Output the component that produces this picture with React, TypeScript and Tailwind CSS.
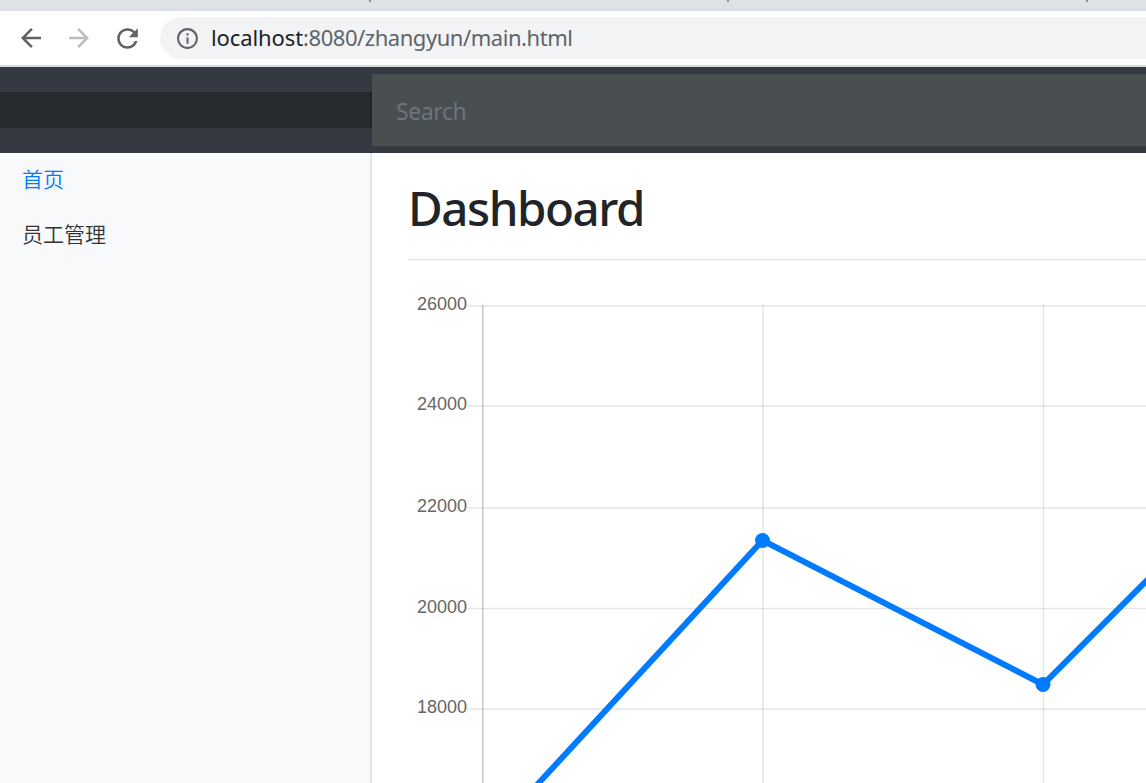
const yTicks = [
  { label: "26000", y: 306, text: 310 },
  { label: "24000", y: 406, text: 410 },
  { label: "22000", y: 508, text: 512 },
  { label: "20000", y: 608.5, text: 613 },
  { label: "18000", y: 709, text: 713 },
];

function BrowserBar() {
  return (
    <div className="h-[67px] shrink-0 flex flex-col">
      <div className="relative h-[11px] bg-[#dee1e6]">
        <span className="absolute left-[369px] top-0 h-[2px] w-[2px] bg-[#8d9095]" />
        <span className="absolute left-[727px] top-0 h-[2px] w-[2px] bg-[#8d9095]" />
        <span className="absolute left-[1086px] top-0 h-[2px] w-[2px] bg-[#8d9095]" />
      </div>
      <div className="flex h-[54px] items-center bg-white pl-4">
        <svg className="size-[30px]" viewBox="0 0 24 24" fill="#5f6368">
          <path d="M20 11H7.83l5.59-5.59L12 4l-8 8 8 8 1.41-1.41L7.83 13H20v-2z" />
        </svg>
        <svg className="ml-[18px] size-[30px]" viewBox="0 0 24 24" fill="#babcbe">
          <path d="M12 4l-1.41 1.41L16.17 11H4v2h12.17l-5.58 5.59L12 20l8-8z" />
        </svg>
        <svg className="ml-[18px] size-[31px]" viewBox="0 0 24 24" fill="#5f6368">
          <path d="M17.65 6.35C16.2 4.9 14.21 4 12 4c-4.42 0-7.99 3.58-7.99 8s3.57 8 7.99 8c3.73 0 6.84-2.55 7.73-6h-2.08c-.82 2.33-3.04 4-5.65 4-3.31 0-6-2.69-6-6s2.69-6 6-6c1.66 0 3.14.69 4.22 1.78L13 11h7V4l-2.35 2.35z" />
        </svg>
        <div className="ml-[17px] flex h-[42px] flex-1 items-center rounded-l-full bg-[#f1f3f4] pl-[15px]">
          <svg className="size-[25px] shrink-0" viewBox="0 0 24 24" fill="#5f6368">
            <path d="M11 7h2v2h-2zm0 4h2v6h-2zm1-9C6.48 2 2 6.48 2 12s4.48 10 10 10 10-4.48 10-10S17.52 2 12 2zm0 18c-4.41 0-8-3.59-8-8s3.59-8 8-8 8 3.59 8 8-3.59 8-8 8z" />
          </svg>
          <span className="ml-[11px] whitespace-nowrap pb-[2px] text-[22px] leading-[30px] tracking-[-0.45px] text-[#5f6368]">
            <span className="tracking-[-0.1px] text-[#202124]">localhost</span>:8080/zhangyun/main.html
          </span>
        </div>
      </div>
      <div className="h-[2px] bg-[#d7dadd]" />
    </div>
  );
}

function Header() {
  return (
    <header className="flex h-[86px] shrink-0 items-center bg-[#343a40]">
      <div className="flex h-full w-[372px] items-center bg-[#353941]">
        <div className="h-9 w-full bg-[#272a2e] shadow-[inset_-2px_0_0_#1f2225]" />
      </div>
      <div className="flex h-[72px] flex-1 items-center bg-[#494e51] px-6 text-[23px] tracking-[-0.4px] text-[#6c757d]">
        <span className="pt-[3px]">Search</span>
      </div>
    </header>
  );
}

function Chart() {
  return (
    <svg className="block h-[523px] w-[774px]" viewBox="372 260 774 523">
      {yTicks.map((t) => (
        <g key={t.label}>
          <line x1="467" x2="1146" y1={t.y} y2={t.y} stroke="#000" strokeOpacity="0.1" strokeWidth="1.5" />
          <text x="467" y={t.text} textAnchor="end" fill="#666" fontSize="18" fontFamily="'Liberation Sans', sans-serif">
            {t.label}
          </text>
        </g>
      ))}
      <line x1="482.75" x2="482.75" y1="305" y2="783" stroke="#000" strokeOpacity="0.22" strokeWidth="1.5" />
      <line x1="763" x2="763" y1="305" y2="783" stroke="#000" strokeOpacity="0.1" strokeWidth="1.5" />
      <line x1="1043.5" x2="1043.5" y1="305" y2="783" stroke="#000" strokeOpacity="0.1" strokeWidth="1.5" />
      <polyline
        points="482,844.5 762.5,540.5 1043,684.5 1323,404"
        fill="none"
        stroke="#007bff"
        strokeWidth="6"
        strokeLinejoin="miter"
      />
      <circle cx="762.5" cy="540.5" r="7.5" fill="#007bff" />
      <circle cx="1043" cy="684.5" r="7.5" fill="#007bff" />
    </svg>
  );
}

export default function App() {
  return (
    <div className="flex h-[783px] w-[1146px] flex-col overflow-hidden bg-white font-['Noto_Sans','Noto_Sans_CJK_SC',sans-serif]">
      <BrowserBar />
      <Header />
      <div className="flex min-h-0 flex-1">
        <nav className="flex w-[372px] shrink-0 flex-col gap-[23px] bg-[#f8f9fb] pl-[22px] pt-[9px] font-['Noto_Sans_CJK_SC',sans-serif] text-[21px] font-[350] leading-8 shadow-[inset_-1.5px_0_0_rgba(0,0,0,0.1)]">
          <a className="text-[#007bff]">首页</a>
          <a className="text-[#333]">员工管理</a>
        </nav>
        <main className="flex flex-1 flex-col">
          <div className="ml-9 h-[107px] shrink-0 border-b border-[#dee2e6] pt-[25px]">
            <h1 className="text-[47.5px] font-medium leading-[60px] tracking-[-1.45px] text-[#212529]">Dashboard</h1>
          </div>
          <Chart />
        </main>
      </div>
    </div>
  );
}
